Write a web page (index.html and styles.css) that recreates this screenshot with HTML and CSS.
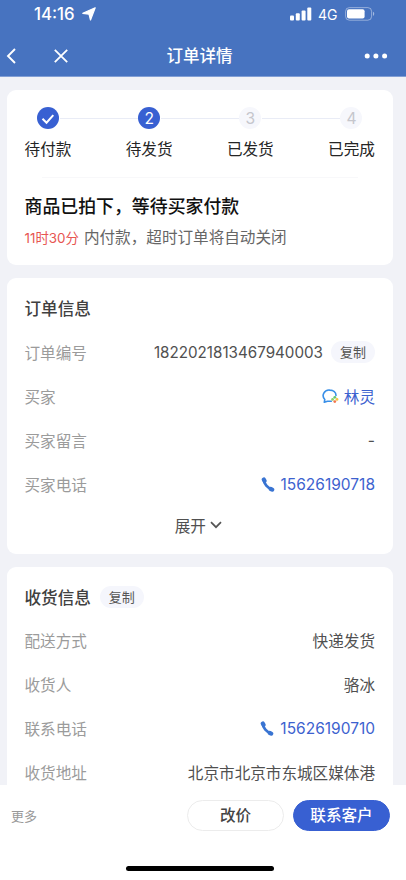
FILE: index.html
```html
<!DOCTYPE html>
<html lang="zh-CN">
<head>
<meta charset="utf-8">
<title>订单详情</title>
<link rel="stylesheet" href="styles.css">
</head>
<body>
<div class="app">
  <header class="header">
    <div class="status">
      <span class="time">14:16</span>
      <svg class="location" width="14" height="14" viewBox="0 0 14 14"><path d="M13.2.8 8.500 13 7 7.200.8 6.300Z" fill="#fff" stroke="#fff" stroke-width="1.2" stroke-linejoin="round"/></svg>
      <svg class="signal" width="22" height="14" viewBox="0 0 22 14" fill="#fff"><rect x="0" y="8.5" width="4" height="5" rx="1"/><rect x="5.800" y="6.3" width="4" height="7.2" rx="1"/><rect x="11.6" y="3.5" width="4" height="10" rx="1"/><rect x="17.3" y=".5" width="4" height="13" rx="1"/></svg>
      <span class="network">4G</span>
      <svg class="battery" width="30" height="14" viewBox="0 0 30 14"><rect x=".6" y=".6" width="26" height="12.6" rx="3.8" fill="none" stroke="#fff" stroke-opacity=".42"/><rect x="2" y="2.2" width="17.600" height="9.4" rx="2" fill="#fff"/><path d="M28 4.8c1.7.7 1.7 3.5 0 4.2Z" fill="#fff" fill-opacity=".5"/></svg>
    </div>
    <nav class="nav">
      <div class="nav-left">
        <svg width="10" height="16" viewBox="0 0 10 16"><path d="M9 1 2 8l7 7" fill="none" stroke="#fff" stroke-width="1.9"/></svg>
        <svg width="14" height="14" viewBox="0 0 14 14"><path d="m.8.8 12.4 12.4M13.2.8.8 13.2" fill="none" stroke="#fff" stroke-width="1.8"/></svg>
      </div>
      <h1>订单详情</h1>
      <svg class="more-dots" width="24" height="6" viewBox="0 0 24 6" fill="#fff"><circle cx="3.2" cy="3" r="2.5"/><circle cx="11.9" cy="3" r="2.5"/><circle cx="20.6" cy="3" r="2.5"/></svg>
    </nav>
  </header>

  <main class="content">
    <section class="card progress">
      <ol class="steps">
        <li class="step done"><span class="dot"><svg width="14" height="12" viewBox="0 0 14 12"><path d="m1.5 5.8 4 3.9 6.8-7.5" fill="none" stroke="#fff" stroke-width="2"/></svg></span>待付款</li>
        <li class="step done"><span class="dot">2</span>待发货</li>
        <li class="step"><span class="dot">3</span>已发货</li>
        <li class="step"><span class="dot">4</span>已完成</li>
      </ol>
      <hr>
      <h2>商品已拍下，等待买家付款</h2>
      <p><span class="countdown">11时30分</span>内付款，超时订单将自动关闭</p>
    </section>

    <section class="card info">
      <h3>订单信息</h3>
      <div class="row"><span class="label">订单编号</span><span class="value"><span class="number">1822021813467940003</span><button class="copy">复制</button></span></div>
      <div class="row"><span class="label">买家</span><span class="value link"><svg class="chat" width="17" height="15" viewBox="0 0 17 15"><path d="M9.3 12.300H5.500L2.300 13.200l.5-2.700A5.900 5.600 0 0 1 7.800 1.100c3.700 0 6.200 2.200 6.200 5.300" fill="none" stroke="#398fe8" stroke-width="1.6" stroke-linejoin="round" stroke-linecap="round"/><circle cx="12.8" cy="8.300" r="1.4" fill="#65c870"/><circle cx="15" cy="10.4" r="1.4" fill="#f7c443"/><circle cx="10.6" cy="10.4" r="1.4" fill="#8ccf6a"/><circle cx="12.8" cy="12.6" r="1.4" fill="#f2764d"/></svg>林灵</span></div>
      <div class="row"><span class="label">买家留言</span><span class="value">-</span></div>
      <div class="row"><span class="label">买家电话</span><span class="value link"><svg class="phone" width="14" height="15" viewBox="0 0 14 15"><path d="M2.700 2.600C2.700 6.500 7 11.400 11 12.200" fill="none" stroke="#3974d2" stroke-width="2.700"/><path d="M2.800 2.500 3.500 3.800M9.800 12 11.200 12.600" fill="none" stroke="#3974d2" stroke-width="4.200" stroke-linecap="round"/></svg><span class="tel">15626190718</span></span></div>
      <div class="expand">展开<svg width="12" height="8" viewBox="0 0 12 8"><path d="m1 1.2 5 5 5-5" fill="none" stroke="#555" stroke-width="1.7"/></svg></div>
    </section>

    <section class="card delivery">
      <h3>收货信息<button class="copy">复制</button></h3>
      <div class="row"><span class="label">配送方式</span><span class="value">快递发货</span></div>
      <div class="row"><span class="label">收货人</span><span class="value">骆冰</span></div>
      <div class="row"><span class="label">联系电话</span><span class="value link"><svg class="phone" width="14" height="15" viewBox="0 0 14 15"><path d="M2.700 2.600C2.700 6.500 7 11.400 11 12.200" fill="none" stroke="#3974d2" stroke-width="2.700"/><path d="M2.800 2.500 3.500 3.800M9.800 12 11.200 12.600" fill="none" stroke="#3974d2" stroke-width="4.200" stroke-linecap="round"/></svg><span class="tel">15626190710</span></span></div>
      <div class="row"><span class="label">收货地址</span><span class="value">北京市北京市东城区媒体港</span></div>
    </section>
  </main>

  <footer class="footer">
    <div class="actions">
      <span class="more">更多</span>
      <button class="button">改价</button>
      <button class="button primary">联系客户</button>
    </div>
    <div class="home-bar"></div>
  </footer>
</div>
</body>
</html>
```
FILE: styles.css
```css
* { box-sizing: border-box; }
body, h1, h2, h3, p, ol { margin: 0; padding: 0; }
body {
  font-family: Inter, "Noto Sans CJK SC", sans-serif;
  font-size: 15.6px;
  color: #505050;
}
button { font-family: inherit; border: 0; padding: 0; }
svg { flex: none; display: block; }
.app { height: 880px; display: flex; flex-direction: column; overflow: hidden; background: #f1f2f7; }

.header { flex: none; height: 77px; background: #4773c0; border-bottom: 1px solid #829fd5; color: #fff; }
.status { height: 28px; display: flex; align-items: center; padding: 0 31px 0 34px; }
.time { font-size: 16.8px; font-weight: 500; width: 43px; }
.location { margin-left: 5px; }
.signal { margin-left: auto; }
.network { font-size: 14px; margin: 0 7px 0 6px; width: 20px; }
.nav { height: 55px; display: grid; grid-template-columns: 1fr auto 1fr; align-items: center; padding: 0 18px 0 6px; }
.nav-left { display: flex; align-items: center; gap: 38px; }
.nav h1 { font-size: 16.5px; font-weight: 500; line-height: 24px; margin-left: 5px; }
.more-dots { justify-self: end; }

.content { flex: 1; min-height: 0; overflow: hidden; padding: 13px 13px 0 7px; }
.card { background: #fff; border-radius: 9px; padding: 0 18px 0 17.5px; margin-bottom: 13px; }
.progress { height: 175px; padding-top: 17px; }
.steps { list-style: none; display: flex; justify-content: space-between; }
.step { position: relative; width: 47px; display: flex; flex-direction: column; align-items: center; color: #252525; line-height: 24px; white-space: nowrap; }
.step + .step::before { content: ""; position: absolute; top: 11px; right: 35px; width: 78px; height: 1px; background: #e9ecf6; }
.dot { width: 22px; height: 22px; border-radius: 50%; background: #f6f7fc; color: #c5c6cc; display: flex; align-items: center; justify-content: center; margin-bottom: 9px; padding-top: 1px; }
.done .dot { background: #3860d2; color: #fff; }
.progress hr { border: 0; height: 1px; background: #f8f8fa; margin: 15px 17px 16px; }
.progress h2 { color: #111; font-size: 17.9px; font-weight: 500; line-height: 26px; }
.progress p { line-height: 24px; margin-top: 6px; color: #666; display: flex; align-items: center; }
.countdown { font-size: 13.4px; color: #e75551; margin-right: 5px; }

.info { height: 276px; padding-top: 18px; }
.delivery { height: 275px; padding-top: 18px; }
.card h3 { display: flex; align-items: center; height: 24px; margin-bottom: 10px; font-size: 16.6px; font-weight: 500; color: #404040; }
.delivery h3 { margin-bottom: 9px; }
.row { height: 44px; display: flex; align-items: center; justify-content: space-between; }
.label { color: #9b9b9b; }
.value { display: flex; align-items: center; }
.number { font-size: 15.2px; }
.tel { font-size: 15.5px; }
.copy { width: 44px; height: 22px; line-height: 22px; border-radius: 11px; background: #f5f6fc; color: #555; font-size: 13px; margin-left: 8px; }
.card h3 .copy { margin-left: 9px; }
.link { color: #3d62cf; }
.chat { margin-right: 5px; }
.phone { margin-right: 6px; }
.expand { height: 38px; display: flex; align-items: center; justify-content: center; gap: 4px; margin-right: 3px; }

.footer { flex: none; height: 95px; background: #fff; }
.actions { height: 61px; padding: 0 16px 0 11px; display: flex; align-items: center; }
.more { color: #999; font-size: 13px; margin-right: auto; }
.button { width: 97px; height: 31px; line-height: 29px; border-radius: 16px; background: #fff; border: 1px solid #ececec; font-size: 15.6px; font-weight: 500; color: #444; }
.primary { margin-left: 9px; background: #3860d2; border-color: #3860d2; color: #fff; }
.home-bar { width: 148px; height: 5px; margin: 20px 0 0 126px; border-radius: 3px; background: #000; }
```
